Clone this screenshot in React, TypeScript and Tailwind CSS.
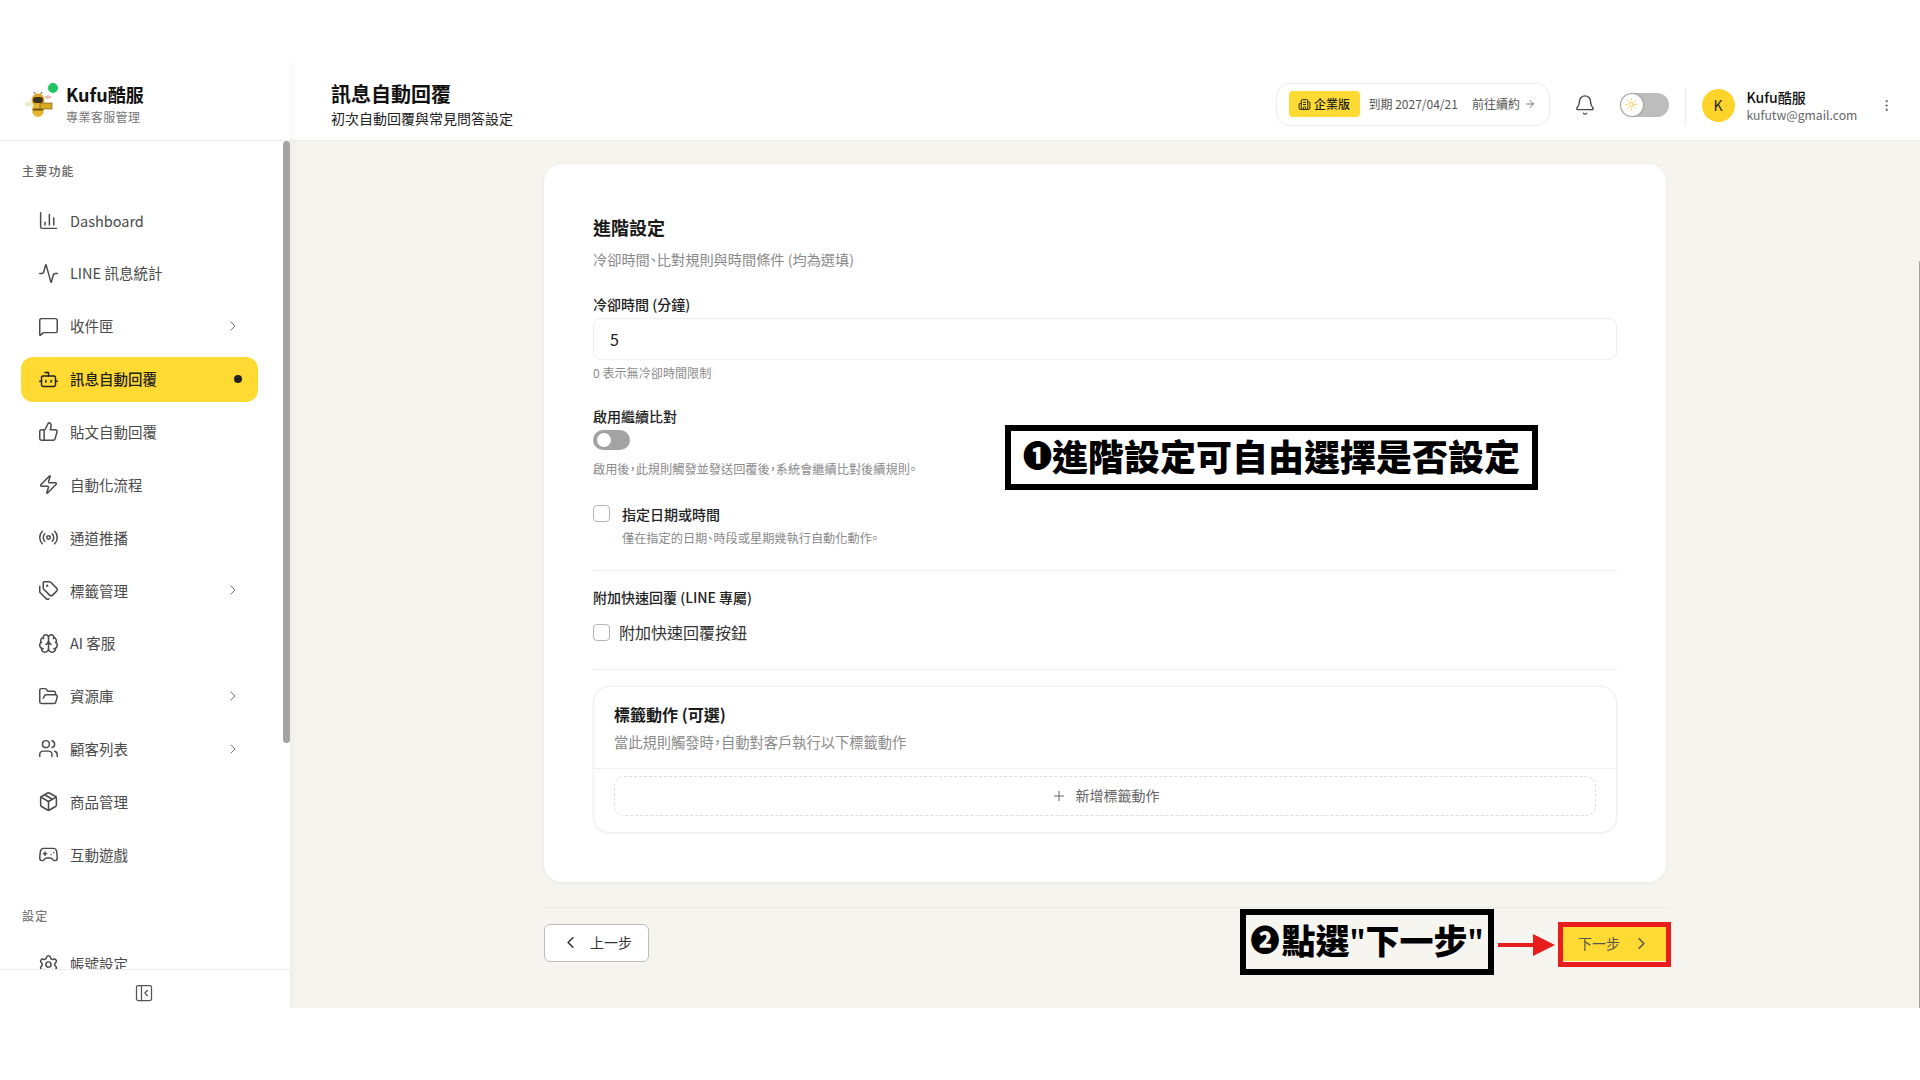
import {
  Activity,
  ArrowRight,
  Bell,
  Bot,
  Brain,
  Building2,
  ChartColumn,
  ChevronLeft,
  ChevronRight,
  EllipsisVertical,
  FolderOpen,
  Gamepad2,
  MessageSquare,
  Package,
  PanelLeftClose,
  Plus,
  Radio,
  Settings,
  Sun,
  Tags,
  ThumbsUp,
  Users,
  Zap,
} from 'lucide-react';

const font = 'font-["Noto_Sans_CJK_TC","Noto_Sans",sans-serif] [font-feature-settings:"palt"]';

const mainNav = [
  { label: 'Dashboard', icon: ChartColumn },
  { label: 'LINE 訊息統計', icon: Activity },
  { label: '收件匣', icon: MessageSquare, arrow: true },
  { label: '訊息自動回覆', icon: Bot, active: true },
  { label: '貼文自動回覆', icon: ThumbsUp },
  { label: '自動化流程', icon: Zap },
  { label: '通道推播', icon: Radio },
  { label: '標籤管理', icon: Tags, arrow: true },
  { label: 'AI 客服', icon: Brain },
  { label: '資源庫', icon: FolderOpen, arrow: true },
  { label: '顧客列表', icon: Users, arrow: true },
  { label: '商品管理', icon: Package },
  { label: '互動遊戲', icon: Gamepad2 },
];

function NavItem({ item }: { item: (typeof mainNav)[number] }) {
  const Icon = item.icon;
  return (
    <div
      className={`flex h-[45px] shrink-0 items-center rounded-[12px] pl-[17px] pr-[17px] ${
        item.active ? 'bg-[#ffda33] font-medium text-[#222222]' : 'text-[#4a4a4a]'
      }`}
    >
      <Icon size={21} strokeWidth={1.7} className="shrink-0" />
      <span className="ml-[11px] flex-1 text-[14.5px]">{item.label}</span>
      {item.arrow && <ChevronRight size={16} strokeWidth={1.5} className="text-[#777777]" />}
      {item.active && <span className="mr-[-1px] h-[8px] w-[8px] rounded-full bg-[#222222]" />}
    </div>
  );
}

function BeeLogo() {
  return (
    <svg width="30" height="30" viewBox="0 0 30 30">
      <ellipse cx="5" cy="15" rx="4.500" ry="2.500" fill="#e9edc9" />
      <path d="M10 3l2 3M18 3l-2 3" stroke="#5b4a1f" strokeWidth="1" />
      <circle cx="14" cy="11" r="6.500" fill="#e0a526" />
      <rect x="9" y="8" width="10" height="6" rx="3" fill="#3b3320" />
      <ellipse cx="14" cy="21" rx="6" ry="7" fill="#e8b62e" />
      <rect x="9" y="19.500" width="10" height="2" fill="#6b5518" />
      <rect x="16" y="14" width="12" height="6" fill="#d6a91f" stroke="#6b5518" strokeWidth="0.6" />
      <ellipse cx="24" cy="8" rx="3" ry="1.800" fill="#f4b6b6" />
    </svg>
  );
}

function Sidebar() {
  return (
    <aside className="relative z-10 flex h-full w-[290px] shrink-0 flex-col bg-white shadow-[2px_0_8px_rgba(0,0,0,0.04)]">
      <div className="flex h-[81px] shrink-0 items-center border-b border-[#ececec] pl-[24px] pt-[8px]">
        <div className="relative mr-[9px] mt-[2px] h-[33px] w-[33px]">
          <BeeLogo />
          <span className="absolute right-[-1px] top-[-6px] h-[10px] w-[10px] rounded-full bg-[#22c55e]" />
        </div>
        <div>
          <div className="text-[18px] font-semibold leading-[24px] text-[#111111]">Kufu酷服</div>
          <div className="mt-[2px] text-[12px] leading-[18px] tracking-[0.4px] text-[#777777]">專業客服管理</div>
        </div>
      </div>
      <div className="flex min-h-0 flex-1">
        <nav className="flex min-w-0 flex-1 flex-col overflow-hidden pl-[21px] pr-[25px] pt-[21px]">
          <div className="mb-[18px] pl-[1px] text-[12px] font-medium leading-[18px] tracking-[1.2px] text-[#666666]">主要功能</div>
          <div className="flex flex-col gap-[7.85px]">
            {mainNav.map((item) => (
              <NavItem key={item.label} item={item} />
            ))}
          </div>
          <div className="mb-[28px] mt-[30px] pl-[1px] text-[12px] font-medium leading-[18px] tracking-[1.2px] text-[#777777]">設定</div>
          <div className="flex items-center pl-[17px] text-[#4a4a4a]">
            <Settings size={21} strokeWidth={1.7} />
            <span className="ml-[11px] text-[14.5px]">帳號設定</span>
          </div>
        </nav>
        <div className="w-[7px] shrink-0">
          <div className="h-[602px] rounded-full bg-[#a3a3a3]" />
        </div>
      </div>
      <div className="flex h-[39px] shrink-0 items-center justify-center border-t border-[#ececec] pr-[3px] pt-[8px]">
        <PanelLeftClose size={20} strokeWidth={1.5} className="text-[#555555]" />
      </div>
    </aside>
  );
}

function Header() {
  return (
    <header className="flex h-[81px] shrink-0 items-center border-b border-[#ececec] bg-white pl-[41px] pr-[26.5px] pt-[11px]">
      <div className="flex-1">
        <div className="text-[20px] font-semibold leading-[26px] text-[#111111]">訊息自動回覆</div>
        <div className="text-[14px] leading-[23px] text-[#222222]">初次自動回覆與常見問答設定</div>
      </div>
      <div className="-mt-[3px] flex h-[43px] w-[274px] items-center rounded-[14px] border border-[#ececec] pl-[12px]">
        <span className="flex h-[26px] w-[71px] items-center justify-center gap-[3px] rounded-[4px] bg-[#ffda33] text-[12px] font-medium text-[#222222]">
          <Building2 size={13} strokeWidth={1.8} />
          企業版
        </span>
        <span className="ml-[9px] text-[12px] text-[#555555]">到期 2027/04/21</span>
        <span className="ml-[14px] flex items-center gap-[4px] text-[12px] text-[#555555]">
          前往續約
          <ArrowRight size={12} strokeWidth={1.6} />
        </span>
      </div>
      <Bell size={22} strokeWidth={1.5} className="-mt-[2px] ml-[24px] text-[#444444]" />
      <div className="-mt-[2px] ml-[24px] flex h-[24px] w-[49px] items-center rounded-full bg-[#bdbdbd] pl-[1px]">
        <span className="flex h-[22px] w-[22px] items-center justify-center rounded-full bg-white shadow-[0_0_2px_rgba(0,0,0,0.5)]">
          <Sun size={13} strokeWidth={1.5} className="text-[#f5c518]" />
        </span>
      </div>
      <div className="ml-[16px] h-[36px] w-px bg-[#eeeeee]" />
      <div className="ml-[16px] flex h-[33px] w-[33px] items-center justify-center rounded-full bg-[#ffd42a] text-[14px] text-[#222222]">K</div>
      <div className="ml-[12px] w-[126px]">
        <div className="text-[14px] font-medium leading-[20px] text-[#111111]">Kufu酷服</div>
        <div className="text-[12.2px] leading-[17px] text-[#666666]">kufutw@gmail.com</div>
      </div>
      <EllipsisVertical size={15} strokeWidth={1.6} className="ml-[6px] text-[#555555]" />
    </header>
  );
}

function Checkbox() {
  return <span className="h-[17px] w-[17px] shrink-0 rounded-[4px] border border-[#b5b5b5] bg-white" />;
}

function AdvancedCard() {
  return (
    <section className="rounded-[18px] bg-white px-[49px] pb-[49px] pt-[50px] shadow-[0_1px_4px_rgba(0,0,0,0.06)]">
      <h2 className="text-[18px] font-semibold leading-[26px] text-[#1a1a1a]">進階設定</h2>
      <p className="mt-[7px] text-[14.2px] leading-[24px] text-[#8a8a8a]">冷卻時間、比對規則與時間條件 (均為選填)</p>

      <label className="mt-[21px] block text-[14px] font-medium leading-[24px] text-[#222222]">冷卻時間 (分鐘)</label>
      <div className="mt-[2px] flex h-[42px] items-center rounded-[8px] border border-[#eeeeee] px-[16px] text-[16px] text-[#222222]">5</div>
      <p className="mt-[4px] text-[12.1px] leading-[18px] text-[#8a8a8a]">0 表示無冷卻時間限制</p>

      <label className="mt-[22px] block text-[14px] font-medium leading-[24px] text-[#222222]">啟用繼續比對</label>
      <div className="mt-[2px] flex h-[20px] w-[37px] items-center rounded-full bg-[#a3a3a3] pl-[4px]">
        <span className="h-[14px] w-[14px] rounded-full bg-white" />
      </div>
      <p className="mt-[10px] text-[12.2px] leading-[18px] text-[#8a8a8a]">啟用後，此規則觸發並發送回覆後，系統會繼續比對後續規則。</p>

      <div className="mt-[27px] flex gap-[12px]">
        <Checkbox />
        <div className="-mt-[2px]">
          <div className="text-[14px] font-medium leading-[22px] text-[#222222]">指定日期或時間</div>
          <div className="mt-[3px] text-[12.2px] leading-[20px] text-[#8a8a8a]">僅在指定的日期、時段或星期幾執行自動化動作。</div>
        </div>
      </div>

      <div className="mt-[22px] border-t border-[#eeeeee] pt-[14px]">
        <div className="text-[14px] font-medium leading-[24px] text-[#222222]">附加快速回覆 (LINE 專屬)</div>
        <div className="mt-[11px] flex items-center gap-[9px]">
          <Checkbox />
          <span className="text-[16px] leading-[24px] text-[#333333]">附加快速回覆按鈕</span>
        </div>
      </div>

      <div className="mt-[24.5px] border-t border-[#eeeeee] pt-[16px]">
        <div className="rounded-[16px] border border-[#eeeeee] shadow-[0_1px_3px_rgba(0,0,0,0.06)]">
          <div className="h-[82px] border-b border-[#eeeeee] px-[20px] pt-[14px]">
            <div className="text-[16px] font-semibold leading-[26px] text-[#1a1a1a]">標籤動作 (可選)</div>
            <div className="mt-[4px] text-[14.25px] leading-[22px] text-[#8a8a8a]">當此規則觸發時，自動對客戶執行以下標籤動作</div>
          </div>
          <div className="px-[20px] pb-[16px] pt-[7px]">
            <div className="flex h-[40px] items-center justify-center gap-[9px] rounded-[10px] border border-dashed border-[#dddddd] text-[14px] text-[#666666]">
              <Plus size={16} strokeWidth={1.5} />
              新增標籤動作
            </div>
          </div>
        </div>
      </div>
    </section>
  );
}

function StepFooter() {
  return (
    <div className="relative mt-[25px] flex items-center justify-between border-t border-[#e9e8e3] pt-[16px]">
      <button className="flex h-[38px] w-[105px] items-center justify-center gap-[10px] rounded-[6px] border border-[#bdbdbd] bg-white text-[14px] text-[#333333]">
        <ChevronLeft size={19} strokeWidth={2} />
        上一步
      </button>
      <button className="mt-[1px] flex h-[35px] w-[103px] items-center justify-center gap-[12px] bg-[#ffda33] text-[14px] text-[#555555]">
        下一步
        <ChevronRight size={19} strokeWidth={2} />
      </button>

      {/* annotation layer, added on top of the screenshot */}
      <div className="absolute left-[696px] top-[1px] flex h-[66px] w-[254px] items-center justify-center whitespace-nowrap border-[6px] border-black bg-[#f6f5f0] pb-[5px] text-[34px] font-black text-black">
        <span className="mr-[2px] text-[29px]">❷</span>點選<span className="text-[28px] font-bold">"</span>下一步<span className="text-[28px] font-bold">"</span>
      </div>
      <svg className="absolute left-[954px] top-[25px]" width="58" height="24" viewBox="0 0 58 24">
        <path d="M0 10h35V1l22 11-22 11v-9H0z" fill="#e81e1e" />
      </svg>
      <div className="absolute right-[-5px] top-[14px] h-[45px] w-[113px] border-[5px] border-[#e81e1e]" />
    </div>
  );
}

export default function App() {
  return (
    <div className={`flex h-screen w-full flex-col bg-white ${font}`}>
      <div className="h-[60px] shrink-0" />
      <div className="flex h-[948px] min-h-0 overflow-hidden">
        <Sidebar />
        <main className="relative flex min-w-0 flex-1 flex-col overflow-hidden bg-[#f5f4ef]">
          <Header />
          <div className="mx-auto mt-[23px] w-[1122px]">
            <AdvancedCard />
            <StepFooter />
          </div>
          {/* annotation layer, added on top of the screenshot */}
          <div className="absolute left-[715px] top-[365px] flex h-[65px] w-[533px] items-center justify-center whitespace-nowrap border-[6px] border-black bg-white pb-[5px] text-[36px] font-black text-black">
            <span className="text-[29px]">❶</span>進階設定可自由選擇是否設定
          </div>
          <div className="absolute bottom-0 right-0 top-[201px] w-px bg-[#a3a3a3]" />
        </main>
      </div>
    </div>
  );
}
